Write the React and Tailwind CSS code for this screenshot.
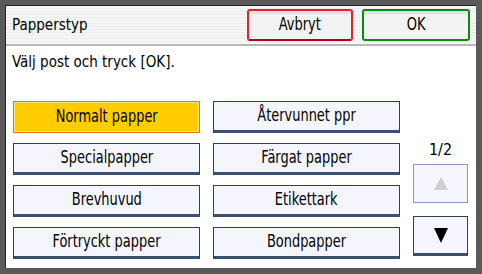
import React from "react";

const font = { fontFamily: '"DejaVu Sans Condensed", "Liberation Sans", sans-serif' };

function OptionButton({ label, selected }) {
    const text = <span className="inline-block text-[18px] leading-none scale-x-[0.8] whitespace-nowrap">{label}</span>;
    if (selected) {
        return (
            <button className="h-[32px] w-[187px] border border-[#f07000] bg-[#ffcc00] shadow-[inset_0_0_0_1px_#ffe680] text-black">
                {text}
            </button>
        );
    }
    return (
        <button className="h-[32px] w-[187px] border border-[#2d3f5c] border-b-[3px] border-b-[#3b4f70] bg-[#f5f6fd] text-black">
            {text}
        </button>
    );
}

function App() {
    const options = [
        ["Normalt papper", "Återvunnet ppr"],
        ["Specialpapper", "Färgat papper"],
        ["Brevhuvud", "Etikettark"],
        ["Förtryckt papper", "Bondpapper"],
    ];

    return (
        <div className="w-[482px] h-[274px] bg-[#5a5a5a] pt-[5px] pl-[5px] pr-[6px] pb-[6px]" style={font}>
            <div className="w-full h-full bg-white border-t border-l border-[#222] flex flex-col">
                <div className="h-[38px] flex items-center pl-[6px] pr-[6px] bg-[repeating-linear-gradient(to_bottom,#f7f7f7_0px,#f7f7f7_2px,#ececec_2px,#ececec_3px)]">
                    <span className="text-[15px] text-black">Papperstyp</span>
                    <button className="ml-auto h-[32px] w-[106px] rounded-[3px] border-2 border-[#e8202a] border-b-[#b00020] bg-[#f3f3f3] text-black shadow-[inset_0_3px_0_#e2e2e2]">
                        <span className="inline-block text-[17px] scale-x-[0.85]">Avbryt</span>
                    </button>
                    <button className="ml-[9px] h-[32px] w-[108px] rounded-[3px] border-2 border-[#0a8a0a] bg-[#f3f3f3] text-black shadow-[inset_0_3px_0_#e2e2e2]">
                        <span className="inline-block text-[17px] scale-x-[0.85]">OK</span>
                    </button>
                </div>
                <div className="h-[2px] bg-[#b8b8b8]"></div>
                <div className="pl-[6px] pt-[6px] text-[15px] text-black leading-[20px]">Välj post och tryck [OK].</div>
                <div className="flex pl-[7px] mt-[29px]">
                    <div className="grid grid-cols-[187px_187px] gap-x-[13px] gap-y-[10px]">
                        {options.map(([a, b], i) => (
                            <React.Fragment key={i}>
                                <OptionButton label={a} selected={i === 0} />
                                <OptionButton label={b} />
                            </React.Fragment>
                        ))}
                    </div>
                    <div className="ml-[13px] w-[55px] flex flex-col items-center pt-[40px]">
                        <span className="text-[16px] text-black leading-[18px]">1/2</span>
                        <button className="mt-[5px] w-[55px] h-[39px] border border-[#8a9ab8] bg-[#f5f6fd] flex items-center justify-center">
                            <svg width="14" height="13" viewBox="0 0 14 13"><path d="M7 0 L14 13 L0 13 Z" fill="#cfcfcf" /></svg>
                        </button>
                        <button className="mt-[13px] w-[55px] h-[40px] border border-[#2d3f5c] border-b-[3px] border-b-[#3b4f70] bg-[#f5f6fd] flex items-center justify-center">
                            <svg width="14" height="15" viewBox="0 0 14 15"><path d="M0 0 L14 0 L7 15 Z" fill="#000" /></svg>
                        </button>
                    </div>
                </div>
            </div>
        </div>
    );
}

export default App;
